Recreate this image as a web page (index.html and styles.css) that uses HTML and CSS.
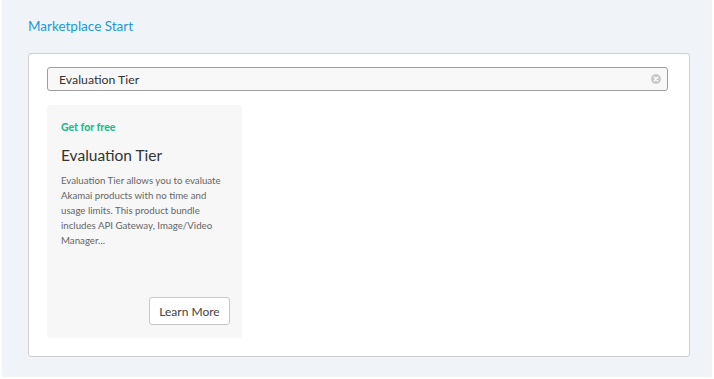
FILE: index.html
```html
<!DOCTYPE html>
<html>
<head>
<meta charset="utf-8">
<link rel="stylesheet" href="styles.css">
</head>
<body>
<div class="page">
  <h1 class="title">Marketplace Start</h1>
  <div class="panel">
    <div class="search">
      <span class="search-text">Evaluation Tier</span>
      <span class="clear">
        <svg width="10" height="10" viewBox="0 0 10 10"><circle cx="5" cy="5" r="5" fill="#c9c9c9"/><path d="M3.3 3.3 L6.7 6.7 M6.7 3.3 L3.3 6.7" stroke="#fff" stroke-width="1.4" stroke-linecap="round"/></svg>
      </span>
    </div>
    <div class="cards">
      <div class="card">
        <div class="tag">Get for free</div>
        <div class="card-title">Evaluation Tier</div>
        <p class="desc">Evaluation Tier allows you to evaluate Akamai products with no time and usage limits. This product bundle includes API Gateway, Image/Video Manager...</p>
        <button class="btn">Learn More</button>
      </div>
    </div>
  </div>
</div>
</body>
</html>
```

FILE: styles.css
```css
html, body {
  margin: 0;
  padding: 0;
  background: #ffffff;
}
body {
  font-family: Lato, "Open Sans", sans-serif;
}
.page {
  margin: 0 2px 2px 2px;
  height: 377px;
  box-sizing: border-box;
  background: #f0f3f7;
  padding: 16px 22px 0 26px;
}
.title {
  margin: 0;
  font-size: 13.5px;
  font-weight: 400;
  color: #1a9ad6;
  line-height: 20px;
  height: 37px;
}
.panel {
  background: #fff;
  border: 1px solid #cfcfcf;
  border-radius: 3px;
  padding: 13px 21px 18px 18px;
  height: 304px;
  box-sizing: border-box;
  display: flex;
  flex-direction: column;
}
.search {
  height: 24px;
  box-sizing: border-box;
  border: 1px solid #9e9e9e;
  border-radius: 3px;
  background: #f8f8f8;
  display: flex;
  align-items: center;
  padding: 0 6px 0 11px;
}
.search-text {
  flex: 1;
  font-size: 12.3px;
  color: #333;
}
.clear {
  display: flex;
}
.cards {
  margin-top: 14px;
  flex: 1;
  display: flex;
}
.card {
  width: 195px;
  background: #f7f7f7;
  border-radius: 3px;
  padding: 15px 12px 13px 14px;
  box-sizing: border-box;
  display: flex;
  flex-direction: column;
}
.tag {
  font-size: 10.5px;
  font-weight: 900;
  color: #1dbb8e;
  line-height: 14px;
}
.card-title {
  margin-top: 11px;
  font-size: 15.5px;
  color: #333;
  line-height: 20px;
}
.desc {
  margin: 8px 0 0 0;
  font-size: 9.7px;
  line-height: 15px;
  color: #666;
  padding-right: 4px;
}
.btn {
  margin-top: auto;
  align-self: flex-end;
  width: 81px;
  height: 28px;
  background: #fff;
  border: 1px solid #c8c8c8;
  border-radius: 3px;
  font-family: inherit;
  font-size: 12px;
  color: #444;
  padding: 0;
}
```
